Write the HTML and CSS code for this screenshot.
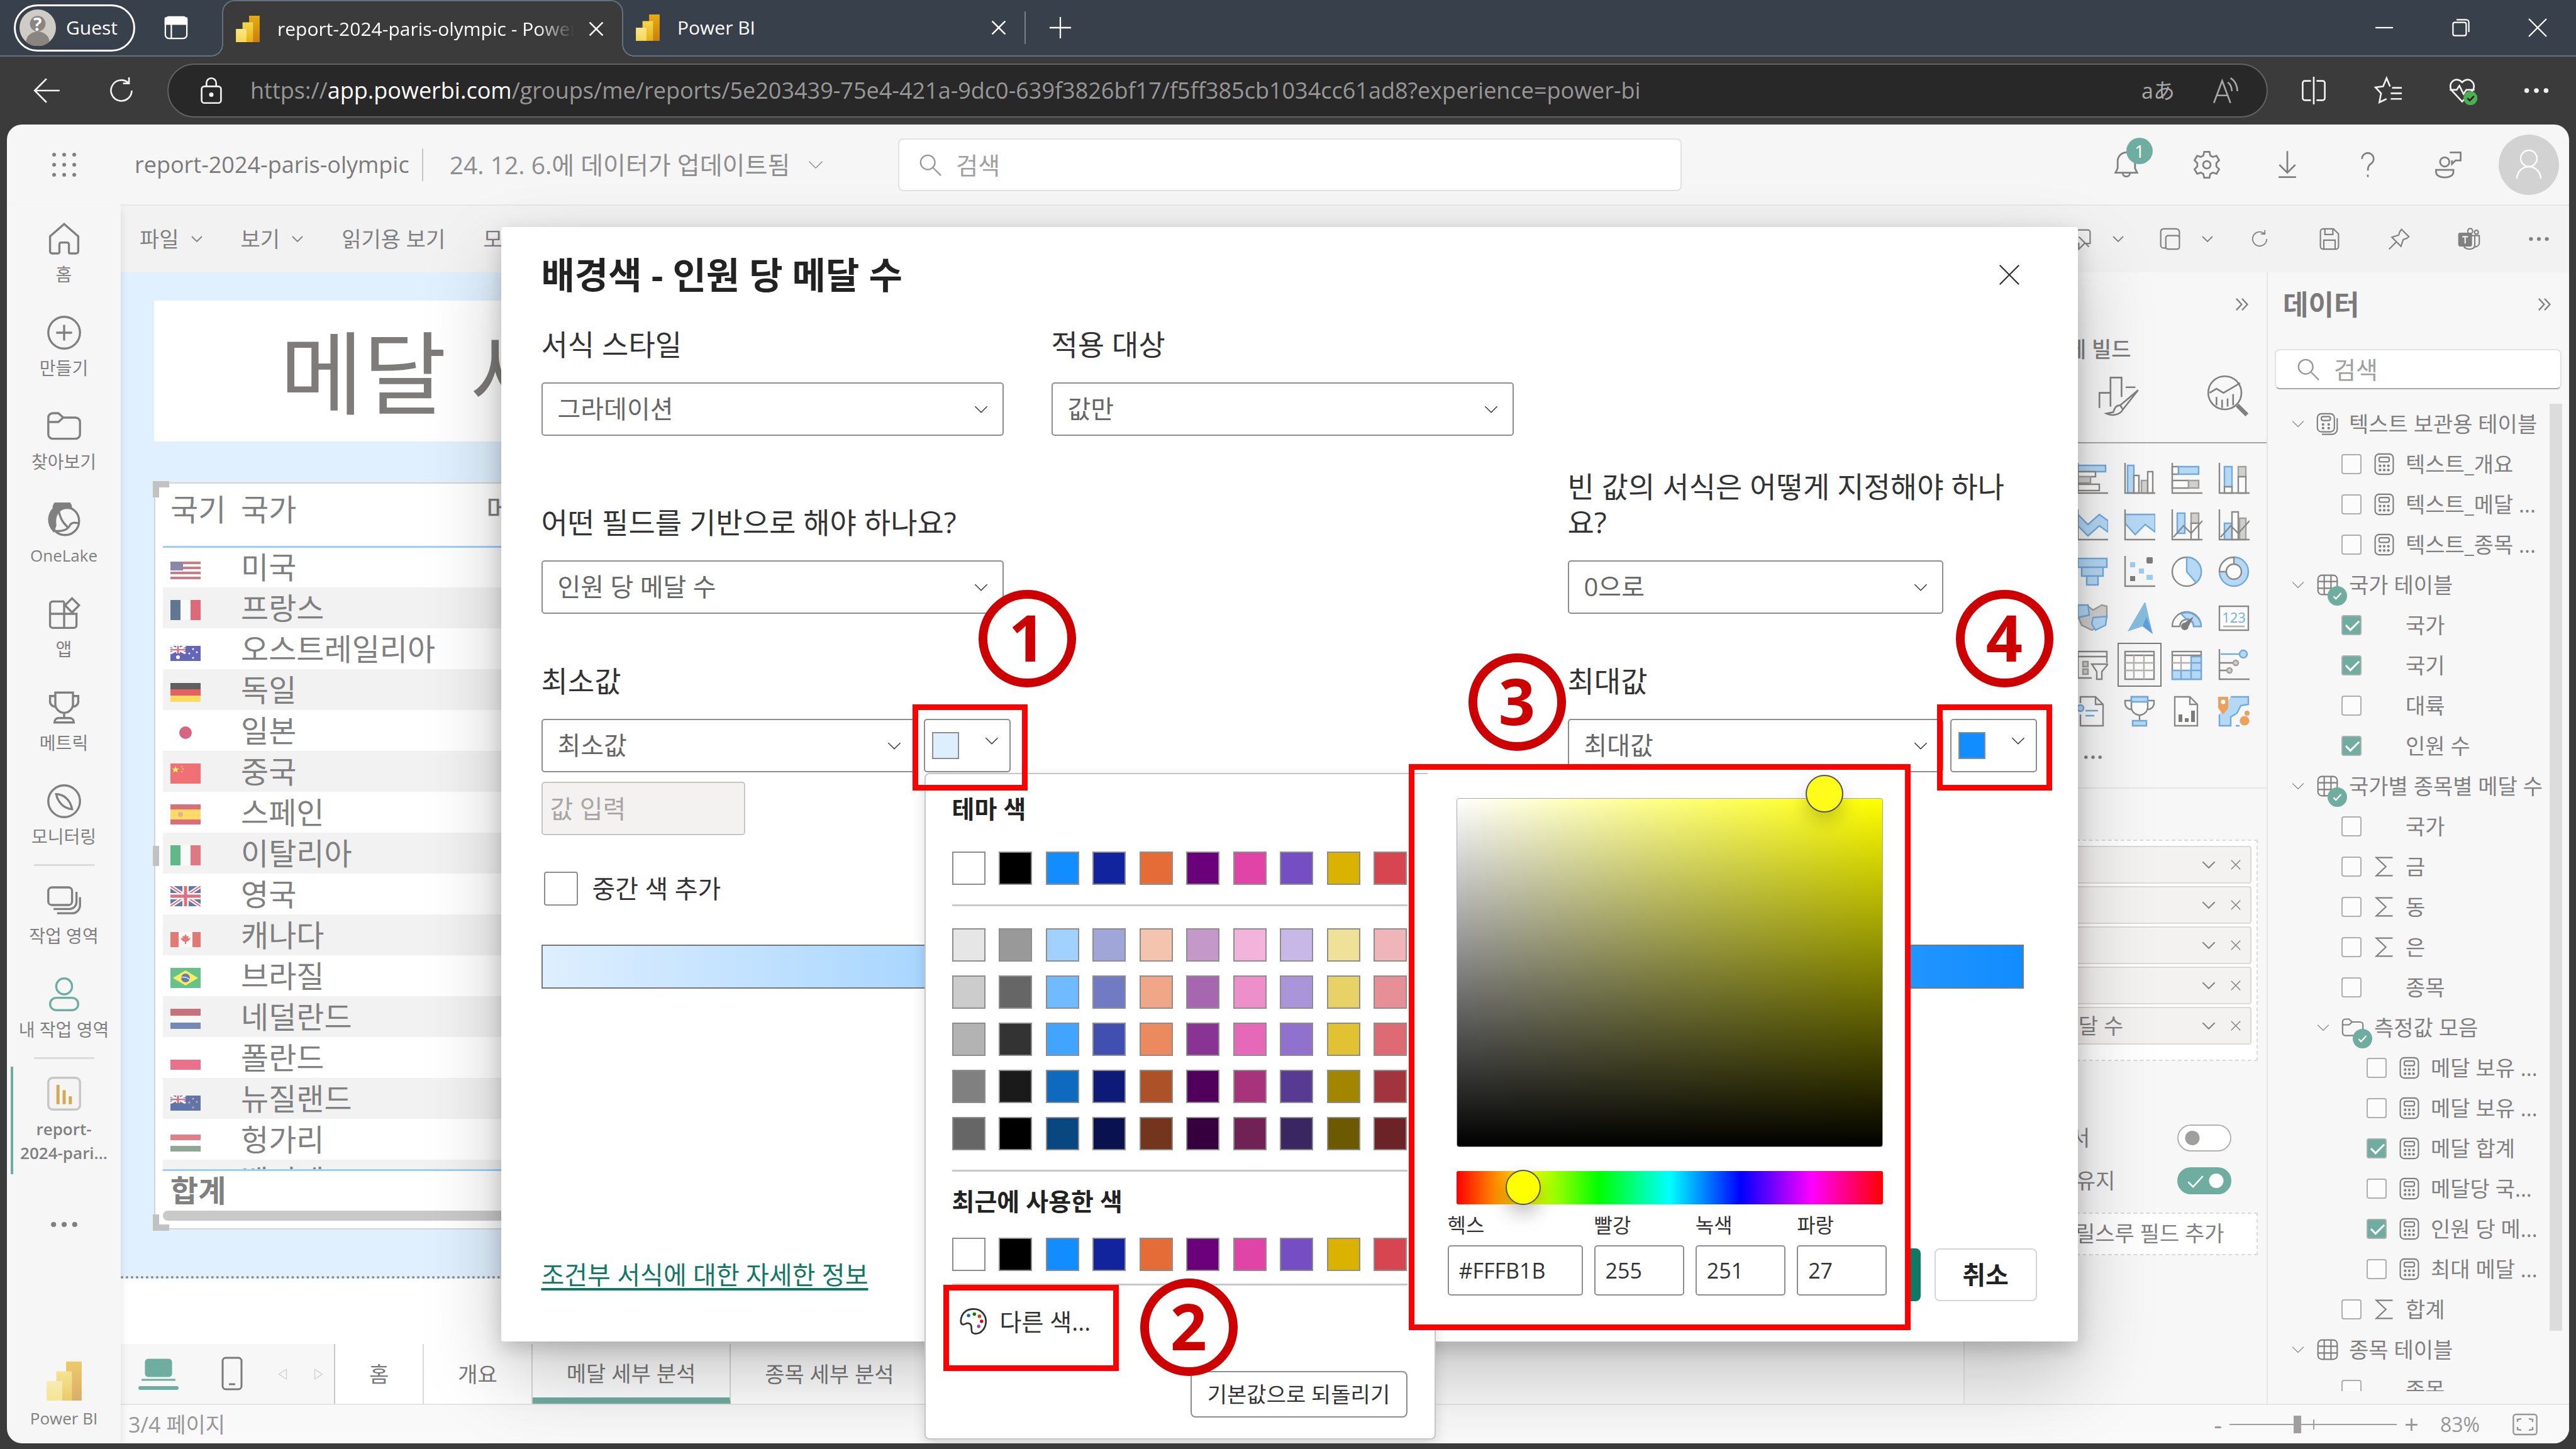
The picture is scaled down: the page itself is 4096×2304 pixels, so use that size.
FILE: index.html
```html
<!DOCTYPE html>
<html lang="ko">
<head>
  <meta charset="UTF-8" />
  <meta name="viewport" content="width=device-width, initial-scale=1.0" />
  <title>report-2024-paris-olympic - Power BI</title>
  <link rel="stylesheet" href="styles.css">
</head>
<body>
  <svg class="defs" aria-hidden="true">
    <defs>
      <linearGradient id="g1" x1="0" y1="0" x2="0" y2="1"><stop offset="0" stop-color="#e6ad10"/><stop offset="1" stop-color="#c87e0e"/></linearGradient>
      <linearGradient id="g2" x1="0" y1="0" x2="0" y2="1"><stop offset="0" stop-color="#f6d751"/><stop offset="1" stop-color="#e6ad10"/></linearGradient>
      <linearGradient id="g3" x1="0" y1="0" x2="0" y2="1"><stop offset="0" stop-color="#f9e589"/><stop offset="1" stop-color="#f6d751"/></linearGradient>
    </defs>
    <symbol id="pbi" viewBox="0 0 20 20"><rect x="11" y="0" width="8" height="20" fill="url(#g1)"/><rect x="6" y="5" width="8" height="15" fill="url(#g2)"/><rect x="1" y="10" width="8" height="10" fill="url(#g3)"/></symbol>
    <symbol id="chev" viewBox="0 0 20 20"><path d="M2 6l8 8 8-8"/></symbol>
    <symbol id="dbl" viewBox="0 0 20 20"><path d="M3 3l6.500 7L3 17M10 3l6.500 7L10 17"/></symbol>
    <symbol id="x" viewBox="0 0 20 20"><path d="M2 2l16 16M18 2L2 18"/></symbol>
    <symbol id="plus" viewBox="0 0 20 20"><path d="M10 1v18M1 10h18"/></symbol>
    <symbol id="search" viewBox="0 0 20 20"><circle cx="8" cy="8" r="6"/><path d="M12.500 12.500L19 19"/></symbol>
    <symbol id="dots" viewBox="0 0 20 20"><g fill="currentColor" stroke="none"><circle cx="3" cy="10" r="1.700"/><circle cx="10" cy="10" r="1.700"/><circle cx="17" cy="10" r="1.700"/></g></symbol>
    <symbol id="refresh" viewBox="0 0 20 20"><path d="M17.500 10a7.500 7.500 0 1 1-2.700-5.800M15.500 .5v4.300h-4.300"/></symbol>
    <symbol id="home" viewBox="0 0 20 20"><path d="M2 8.500L10 1.500l8 7V17a1.200 1.200 0 0 1-1.200 1.200h-3.300a.8.800 0 0 1-.8-.8V13a1 1 0 0 0-1-1H8.300a1 1 0 0 0-1 1v4.400a.8.800 0 0 1-.8.800H3.200A1.200 1.200 0 0 1 2 17z"/></symbol>
    <symbol id="create" viewBox="0 0 20 20"><circle cx="10" cy="10" r="9"/><path d="M10 5.500v9M5.500 10h9"/></symbol>
    <symbol id="folder" viewBox="0 0 20 20"><path d="M1 5a2.500 2.500 0 0 1 2.500-2.500h3.200L9.500 5h7A2.500 2.500 0 0 1 19 7.500v7a2.500 2.500 0 0 1-2.500 2.500h-13A2.500 2.500 0 0 1 1 14.500zM1 7.500h5.700L9.500 5"/></symbol>
    <symbol id="lake" viewBox="0 0 20 20"><circle cx="10.500" cy="10.500" r="8"/><path d="M4 16a9 9 0 0 1 0-12.500A5 5 0 0 1 14 3.300C8 2 4 6 5 13z" fill="currentColor"/><path d="M7 5c1 5 3 7 5 9M4.500 16c5 1 8-1 9-3.500 1.500-1.500 3-1 5-.7"/></symbol>
    <symbol id="apps" viewBox="0 0 20 20"><path d="M10 3H3.500A1.500 1.500 0 0 0 2 4.500v12A1.500 1.500 0 0 0 3.500 18h12a1.500 1.500 0 0 0 1.500-1.500V10H2M10 3v15M14.500 1.200l4 4-4 4-4-4z"/></symbol>
    <symbol id="trophy" viewBox="0 0 20 20"><path d="M5 1.500h10V8a5 5 0 0 1-10 0zM5 3.500H2V6a3 3 0 0 0 3 3.500M15 3.500h3V6a3 3 0 0 1-3 3.500M10 13v3M4.500 18.500c0-1.500 1-2.500 2.500-2.500h6c1.500 0 2.500 1 2.500 2.500z"/></symbol>
    <symbol id="compass" viewBox="0 0 20 20"><circle cx="10" cy="10" r="9"/><path d="M5.500 6c4 0 8 3 9 8.500-4.500-.5-8-3.500-9-8.500z"/></symbol>
    <symbol id="stack" viewBox="0 0 20 20"><rect x="1" y="2.500" width="13.500" height="10" rx="2"/><path d="M4 14.800h9a4 4 0 0 0 4-4V5M6 17.200h8.500a4.500 4.500 0 0 0 4.500-4.500V8"/></symbol>
    <symbol id="person" viewBox="0 0 20 20"><circle cx="10" cy="5.500" r="4.500"/><rect x="2" y="12" width="16" height="7" rx="3.500"/></symbol>
    <symbol id="bell" viewBox="0 0 20 20"><path d="M10 1.500a6 6 0 0 0-6 6v5l-1.500 3h15l-1.500-3v-5a6 6 0 0 0-6-6zM7.500 15.500c0 3.500 5 3.500 5 0"/></symbol>
    <symbol id="gear" viewBox="0 0 20 20"><path d="M8.200 1h3.600l.6 2.600 1.700 1 2.600-.8 1.800 3.100-1.900 1.900v2.400l1.900 1.900-1.800 3.100-2.600-.8-1.700 1-.6 2.600H8.200l-.6-2.600-1.700-1-2.600.8-1.800-3.100 1.900-1.900V8.800L1.500 6.900l1.800-3.100 2.600.8 1.700-1z"/><circle cx="10" cy="10" r="2.600"/></symbol>
    <symbol id="down" viewBox="0 0 20 20"><path d="M10 .5v15M4.500 10l5.500 5.500 5.500-5.500M4 18.500h12"/></symbol>
    <symbol id="help" viewBox="0 0 20 20"><path d="M6 6a4 4 0 1 1 6.500 3c-1.500 1.200-2.500 2-2.500 5M10 16.800v1.700"/></symbol>
    <symbol id="feedback" viewBox="0 0 20 20"><circle cx="7.500" cy="8" r="3.200"/><path d="M1.500 13.500h12v1.500c0 5-12 5-12 0zM11 1.500h7.500V7H15l-2.500 2.500V7"/></symbol>
    <symbol id="lock" viewBox="0 0 20 20"><rect x="3" y="7" width="14" height="12" rx="2"/><path d="M6.500 7V4.500a3.500 3.500 0 0 1 7 0V7"/><circle cx="10" cy="13" r="1" fill="currentColor"/></symbol>
    <symbol id="calc" viewBox="0 0 20 20"><rect x="2" y="1" width="16" height="18" rx="3.500"/><rect x="5.500" y="4" width="9" height="4" rx="1.500"/><g fill="currentColor" stroke="none"><circle cx="6.300" cy="11.500" r="1.200"/><circle cx="10" cy="11.500" r="1.200"/><circle cx="13.700" cy="11.500" r="1.200"/><circle cx="6.300" cy="15.200" r="1.200"/><circle cx="10" cy="15.200" r="1.200"/><circle cx="13.700" cy="15.200" r="1.200"/></g></symbol>
    <symbol id="calcs" viewBox="0 0 20 20"><rect x="1" y="1" width="15" height="16" rx="3.500"/><rect x="4.500" y="3.500" width="8" height="3.500" rx="1.500"/><path d="M5 19.200h9a4.500 4.500 0 0 0 4.500-4.500V5"/><g fill="currentColor" stroke="none"><circle cx="6" cy="10.500" r="1.200"/><circle cx="11" cy="10.500" r="1.200"/><circle cx="6" cy="13.800" r="1.200"/><circle cx="11" cy="13.800" r="1.200"/></g></symbol>
    <symbol id="table" viewBox="0 0 20 20"><rect x="1.500" y="1.500" width="17" height="17" rx="3.500"/><path d="M7 1.500v17M13 1.500v17M1.500 7h17M1.500 13h17"/></symbol>
    <symbol id="sigma" viewBox="0 0 20 20"><path d="M17.500 2H3l8.500 8L3 18h14.500"/></symbol>
    <symbol id="back" viewBox="0 0 20 20"><path d="M19 10H1.500M9.500 1.500L1 10l8.500 8.500"/></symbol>

    <!-- visual gallery -->
    <symbol id="v-bar" viewBox="0 0 25 25"><rect class="vb" x="1" y="2" width="22" height="5"/><rect class="vw" x="1" y="7" width="14" height="4"/><rect class="vg" x="1" y="11" width="10" height="5"/><rect class="vw" x="1" y="17" width="17" height="5"/><path class="vl" d="M1 0v24h24"/></symbol>
    <symbol id="v-col" viewBox="0 0 25 25"><rect class="vb" x="3" y="2" width="5" height="22"/><rect class="vw" x="8" y="10" width="4" height="14"/><rect class="vg" x="14" y="14" width="5" height="10"/><rect class="vw" x="19" y="7" width="4" height="17"/><path class="vl" d="M1 0v24h24"/></symbol>
    <symbol id="v-sbar" viewBox="0 0 25 25"><rect class="vw" x="1" y="3" width="5" height="6"/><rect class="vb" x="6" y="3" width="16" height="6"/><rect class="vw" x="1" y="14" width="13" height="6"/><rect class="vg" x="14" y="14" width="8" height="6"/><path class="vl" d="M1 0v24h24"/></symbol>
    <symbol id="v-scol" viewBox="0 0 25 25"><rect class="vb" x="5" y="3" width="6" height="16"/><rect class="vw" x="5" y="19" width="6" height="5"/><rect class="vg" x="16" y="3" width="6" height="8"/><rect class="vw" x="16" y="11" width="6" height="13"/><path class="vl" d="M1 0v24h24"/></symbol>
    <symbol id="v-area" viewBox="0 0 25 25"><path class="vb" d="M1 4l8 8 9-8 7 5v9l-7-5-9 8-8-8z"/><path class="vl" d="M1 0v24h24"/></symbol>
    <symbol id="v-sarea" viewBox="0 0 25 25"><path class="vb" d="M1 4h24v14l-8-6-8 8-8-9z"/><path class="vl" d="M1 0v24h24"/></symbol>
    <symbol id="v-combo" viewBox="0 0 25 25"><rect class="vb" x="5" y="3" width="6" height="16"/><rect class="vg" x="16" y="3" width="6" height="8"/><rect class="vw" x="16" y="11" width="6" height="13"/><path class="vl" d="M1 0v24h24M2 22l8-9 6 6 9-10"/></symbol>
    <symbol id="v-combo2" viewBox="0 0 25 25"><rect class="vb" x="5" y="11" width="6" height="13"/><rect class="vw" x="11" y="2" width="5" height="22"/><rect class="vg" x="17" y="7" width="5" height="17"/><path class="vl" d="M1 0v24h24M2 22l8-9 6 6 9-10"/></symbol>
    <symbol id="v-funnel" viewBox="0 0 25 25"><rect class="vb" x="1" y="2" width="23" height="7"/><rect class="vb" x="4" y="9" width="17" height="7"/><rect class="vb" x="8" y="16" width="9" height="7"/></symbol>
    <symbol id="v-scatter" viewBox="0 0 25 25"><path class="vl" d="M1 0v24h24"/><g stroke="none"><rect x="5" y="5" width="4" height="4" fill="#9ccbf3"/><rect x="12" y="10" width="4" height="4" fill="#9ccbf3"/><rect x="18" y="15" width="5" height="4" fill="#9ccbf3"/><rect x="18" y="1" width="5" height="5" rx="1" fill="#7d7c7b"/><rect x="5" y="16" width="4" height="4" fill="#7d7c7b"/></g></symbol>
    <symbol id="v-pie" viewBox="0 0 25 25"><circle class="vw" cx="12.500" cy="12.500" r="11.500"/><path class="vb" d="M12.500 1a11.500 11.500 0 0 1 7.500 20.300l-7.500-8.800z"/></symbol>
    <symbol id="v-donut" viewBox="0 0 25 25"><circle class="vb" cx="12.500" cy="12.500" r="11.500"/><path class="vw" d="M12.500 1v5.500a6 6 0 0 0-6 6H1A11.500 11.500 0 0 1 12.500 1z"/><circle class="vw" cx="12.500" cy="12.500" r="6"/></symbol>
    <symbol id="v-map" viewBox="0 0 25 25"><path class="vg" d="M1 2l8 1 4 3 7-4 4 1v9l-4 6-8 4-8-4-3-7z"/><path class="vb" d="M1 2h8l1 8-9 2zM13 12l11-1-1 7-8 4-3-5z"/></symbol>
    <symbol id="v-arc" viewBox="0 0 25 25"><g stroke="none"><path d="M17 -1l6 26-8-6L3 23z" fill="#86bcdc"/><path d="M18 11l5 14-8-6z" fill="#5c9fe0"/></g></symbol>
    <symbol id="v-gauge" viewBox="0 0 25 25"><path class="vw" d="M1 19a11.500 11.500 0 0 1 23 0h-6a5.500 5.500 0 0 0-11 0z"/><path class="vb" d="M8 9a11.500 11.500 0 0 1 16 10h-6a5.500 5.500 0 0 0-6-6z"/><path d="M18 11l-7 5a3 3 0 1 0 3 3z" fill="#7d7c7b" stroke="none"/></symbol>
    <symbol id="v-card" viewBox="0 0 25 25"><rect class="vw" x="1" y="3" width="23" height="19"/><text x="12.500" y="16" text-anchor="middle" class="vt">123</text><path class="vl2" d="M4 19h17"/></symbol>
    <symbol id="v-slicer" viewBox="0 0 25 25"><path class="vw" d="M12 23H1V2h23v9M1 6h23"/><rect class="vg" x="5" y="10" width="4" height="4"/><rect class="vg" x="5" y="16" width="4" height="4"/><path class="vw" d="M12 12h13l-5 6v6h-4v-6z"/></symbol>
    <symbol id="v-table" viewBox="0 0 25 25"><rect class="vw" x="1" y="2" width="23" height="22"/><path class="vl" d="M1 5h23"/><path class="vl2" d="M8 5v19M16 5v19M1 11h23M1 17h23"/></symbol>
    <symbol id="v-matrix" viewBox="0 0 25 25"><rect class="vw" x="1" y="2" width="23" height="22"/><path class="vb" d="M16 6h8v18H1v-7h15zM8 17v7M16 11h8M16 17h8M16 17v7"/><path class="vl2" d="M8 6v11M1 11h15"/><path class="vl" d="M1 5h23"/></symbol>
    <symbol id="v-lines" viewBox="0 0 25 25"><path class="vl" d="M1 0v24h24M1 11h11M1 17h6"/><path class="vb" d="M2 4h15"/><circle class="vb" cx="20" cy="4" r="3"/><circle class="vg" cx="14" cy="11" r="2"/><circle class="vg" cx="9" cy="17" r="2"/></symbol>
    <symbol id="v-narr" viewBox="0 0 25 25"><path class="vw" d="M3 6V1h12l6 6v17H3v-9M15 1v6h6"/><circle class="vb" cx="3" cy="10" r="2.500"/><path class="vb" d="M7 12h10M7 16h7"/></symbol>
    <symbol id="v-goal" viewBox="0 0 25 25"><path class="vw" d="M6 1h13v8a6.500 6.500 0 0 1-13 0zM6 4H1v2a5 5 0 0 0 5 5M19 4h5v2a5 5 0 0 1-5 5M12.500 16v5"/><path class="vb" d="M6 1h13v4H6zM7 24v-4h11v4z"/></symbol>
    <symbol id="v-page" viewBox="0 0 25 25"><path class="vw" d="M3 1h12l6 6v17H3zM15 1v6h6"/><path d="M6 15h3v6H6zM11 18h3v3h-3zM16 12h3v9h-3z" fill="#7d7c7b" stroke="none"/></symbol>
    <symbol id="v-geo" viewBox="0 0 25 25"><path class="vb" d="M10 1h14v6l-6 1-3 6-5 3v7H1V15M14 24h3"/><g stroke="none"><path d="M0 1h8v9l-4 5-4-5z" fill="#eba05c"/><circle cx="4" cy="5" r="1.800" fill="#fff"/><circle cx="21" cy="20" r="3.800" fill="#eba05c"/><circle cx="23" cy="14" r="2" fill="#eba05c"/></g></symbol>
  </svg>

  <header class="titlebar">
    <button class="guest"><svg viewBox="0 0 28 28"><circle cx="14" cy="14" r="14" fill="#cfcbc6"/><circle cx="14" cy="11" r="6" fill="#8a8580"/><path d="M5 25a9 8 0 0 1 18 0 14 14 0 0 1-18 0z" fill="#8a8580"/></svg><b>?</b>Guest</button>
    <button class="tab-actions" aria-label="탭 작업"><svg viewBox="0 0 20 20"><rect x="1" y="1" width="18" height="18" rx="3"/><path d="M1 2h18v5H1z" fill="currentColor"/><path d="M6 7v12"/></svg></button>
    <div class="tab tab-active"><svg class="pbi"><use href="#pbi"/></svg><span>report-2024-paris-olympic - Power BI</span><button aria-label="탭 닫기"><svg><use href="#x"/></svg></button></div>
    <div class="tab"><svg class="pbi"><use href="#pbi"/></svg><span>Power BI</span><button aria-label="탭 닫기"><svg><use href="#x"/></svg></button></div>
    <button class="new-tab" aria-label="새 탭"><svg><use href="#plus"/></svg></button>
    <div class="win">
      <button aria-label="최소화"><svg viewBox="0 0 20 20"><path d="M0 10h20"/></svg></button>
      <button aria-label="이전 크기로"><svg viewBox="0 0 20 20"><rect x="1" y="4" width="15" height="15" rx="2"/><path d="M5 1h11a3 3 0 0 1 3 3v11"/></svg></button>
      <button aria-label="닫기"><svg viewBox="0 0 20 20"><path d="M0 0l20 20M20 0L0 20"/></svg></button>
    </div>
  </header>

  <nav class="toolbar">
    <button aria-label="뒤로"><svg><use href="#back"/></svg></button>
    <button aria-label="새로 고침"><svg><use href="#refresh"/></svg></button>
    <div class="address">
      <svg><use href="#lock"/></svg>
      <span class="url">https://<b>app.powerbi.com</b>/groups/me/reports/5e203439-75e4-421a-9dc0-639f3826bf17/f5ff385cb1034cc61ad8?experience=power-bi</span>
      <span class="lang">aあ</span>
      <svg class="read" viewBox="0 0 20 20"><path d="M1 19L7 3l6 16M3 13.500h8M11 4c2 1.500 3 4 3 6.500M13 1c3.500 2 5 6 5 9.500"/></svg>
    </div>
    <button aria-label="화면 분할"><svg viewBox="0 0 20 20"><path d="M8 3H3.500A1.500 1.500 0 0 0 2 4.500v11A1.500 1.500 0 0 0 3.500 17H8M12 3h4.500A1.500 1.500 0 0 1 18 4.500v11a1.500 1.500 0 0 1-1.500 1.500H12M10 0v20"/></svg></button>
    <button aria-label="즐겨찾기"><svg viewBox="0 0 20 20"><path d="M11.500 7L9 1 6.500 7 1 7.700l4 4.300-1.200 6.500L9 16M13 8h7M12 12h8M12 16h8"/></svg></button>
    <button class="health" aria-label="성능"><svg viewBox="0 0 20 20"><path d="M10 18L2.500 10C-1 5 5-1 10 4c5-5 11 1 7.500 6zM1 9.500h5l2-3 3 6 2-3h6"/><circle cx="16" cy="15.500" r="5" fill="#4caf50" stroke="none"/><path d="M13.800 15.500l1.700 1.700 3-3.200" stroke="#222"/></svg></button>
    <button aria-label="설정"><svg><use href="#dots"/></svg></button>
  </nav>

  <main class="app">
    <header class="app-header">
      <button class="waffle" aria-label="앱 시작 관리자"><svg viewBox="0 0 20 20"><g fill="currentColor" stroke="none"><circle cx="2" cy="2" r="1.500"/><circle cx="10" cy="2" r="1.500"/><circle cx="18" cy="2" r="1.500"/><circle cx="2" cy="10" r="1.500"/><circle cx="10" cy="10" r="1.500"/><circle cx="18" cy="10" r="1.500"/><circle cx="2" cy="18" r="1.500"/><circle cx="10" cy="18" r="1.500"/><circle cx="18" cy="18" r="1.500"/></g></svg></button>
      <span class="report-name">report-2024-paris-olympic</span>
      <button class="updated">24. 12. 6.에 데이터가 업데이트됨<svg><use href="#chev"/></svg></button>
      <label class="search header-search"><svg><use href="#search"/></svg><input type="text" placeholder="검색" aria-label="검색"></label>
      <div class="header-icons">
        <button aria-label="알림"><svg><use href="#bell"/></svg><span class="count">1</span></button>
        <button aria-label="설정"><svg><use href="#gear"/></svg></button>
        <button aria-label="다운로드"><svg><use href="#down"/></svg></button>
        <button aria-label="도움말"><svg><use href="#help"/></svg></button>
        <button aria-label="피드백"><svg><use href="#feedback"/></svg></button>
        <button aria-label="계정"><svg class="avatar" viewBox="0 0 48 48"><circle cx="24" cy="24" r="24" fill="#d2d2d2" stroke="none"/><circle cx="24" cy="19" r="6.500"/><path d="M14.500 35a9.500 9.500 0 0 1 19 0"/></svg></button>
      </div>
    </header>

    <div class="app-body">
      <nav class="rail">
        <a href="#"><svg><use href="#home"/></svg>홈</a>
        <a href="#"><svg><use href="#create"/></svg>만들기</a>
        <a href="#"><svg><use href="#folder"/></svg>찾아보기</a>
        <a href="#" class="latin"><svg><use href="#lake"/></svg>OneLake</a>
        <a href="#"><svg><use href="#apps"/></svg>앱</a>
        <a href="#"><svg><use href="#trophy"/></svg>메트릭</a>
        <a href="#"><svg><use href="#compass"/></svg>모니터링</a>
        <hr>
        <a href="#"><svg><use href="#stack"/></svg>작업 영역</a>
        <a href="#"><svg class="green"><use href="#person"/></svg>내 작업 영역</a>
        <hr>
        <a href="#" class="current"><svg viewBox="0 0 20 20"><rect x="1" y="1" width="18" height="18" rx="2.500" stroke="#c6c6c6" fill="#f4f4f4"/><path d="M6.500 5v11M10 8v8M13.500 11.500V16" stroke="#d4ab55" stroke-width="1.800"/></svg>report-<br>2024-pari...</a>
        <button class="more" aria-label="더 보기"><svg><use href="#dots"/></svg></button>
        <a href="#" class="logo latin"><svg><use href="#pbi"/></svg>Power BI</a>
      </nav>

      <div class="main">
        <div class="ribbon">
          <button>파일<svg><use href="#chev"/></svg></button>
          <button>보기<svg><use href="#chev"/></svg></button>
          <button>읽기용 보기</button>
          <button>모바일 레이아웃</button>
          <div class="ribbon-right">
            <svg viewBox="0 0 20 20"><path d="M2 2h14a2 2 0 0 1 2 2v10h-5l-5 5v-5H2M8 8l9 9"/></svg>
            <svg class="small"><use href="#chev"/></svg>
            <svg viewBox="0 0 20 20"><rect x="6" y="7" width="12" height="12" rx="2"/><path d="M6 18H4a2.500 2.500 0 0 1-2.500-2.500v-12A2.500 2.500 0 0 1 4 1h11a3 3 0 0 1 3 3v5"/></svg>
            <svg class="small"><use href="#chev"/></svg>
            <svg class="reload"><use href="#refresh"/></svg>
            <svg viewBox="0 0 20 20"><path d="M2 3.500A2.500 2.500 0 0 1 4.500 1h9L18 5.500v11a2.500 2.500 0 0 1-2.500 2.500h-11A2.500 2.500 0 0 1 2 16.500zM6 1v5h7V1M5 19v-8h10v8"/></svg>
            <svg viewBox="0 0 20 20"><path d="M12 1.500l6.500 6.500-2 1.500-3 1-2 6-8-8 6-2 1-3zM7.500 12.500L1 19"/></svg>
            <svg viewBox="0 0 20 20"><rect x="1" y="5" width="11" height="11" rx="1" fill="currentColor"/><path d="M4 8h5M6.500 8v6" stroke="#f2f2f2"/><circle cx="11" cy="3" r="2.200"/><circle cx="16.500" cy="4" r="1.700"/><path d="M12 7h7v7a4 4 0 0 1-4 3M5 16c2 4 9 4 10 0V7"/></svg>
            <svg><use href="#dots"/></svg>
          </div>
        </div>

        <div class="work">
          <section class="report">
            <div class="page">
              <h1>메달 세부 분석</h1>
              <div class="visual">
                <i class="handle tl"></i><i class="handle ml"></i><i class="handle bl"></i>
                <div class="rows">
                  <table>
                    <thead><tr><th>국기</th><th>국가</th><th>메달 합계</th><th></th></tr></thead>
                    <tbody id="countries"></tbody>
                  </table>
                </div>
                <div class="total">합계</div>
                <div class="hscroll"></div>
              </div>
            </div>
            <div class="below"></div>
            <div class="pages">
              <div class="views">
                <svg class="green" viewBox="0 0 64 50"><rect x="11" y="1" width="42" height="28" rx="5" fill="currentColor"/><path d="M5 34h54" stroke-width="3"/><path d="M3 47h58" stroke-width="6" stroke-linecap="round"/></svg>
                <svg viewBox="0 0 34 56"><rect x="2" y="2" width="30" height="50" rx="5" stroke-width="3"/><path d="M12 44h10" stroke-width="3"/></svg>
                <svg class="arrow" viewBox="0 0 20 20"><path d="M15 3v14L4 10z"/></svg>
                <svg class="arrow" viewBox="0 0 20 20"><path d="M5 3v14l11-7z"/></svg>
              </div>
              <button>홈</button>
              <button>개요</button>
              <button class="on">메달 세부 분석</button>
              <button>종목 세부 분석</button>
            </div>
          </section>

          <aside class="pane viz">
            <div class="pane-head"><h2>시각화</h2><svg><use href="#dbl"/></svg></div>
            <p class="build">시각적 개체 빌드</p>
            <div class="modes">
              <svg viewBox="0 0 30 30"><use href="#v-table"/></svg>
              <svg viewBox="0 0 30 30"><path d="M1 24V13h8V2h8v14M20 9h7M9 13v10"/><path d="M29 11L16 22l2 3zM16 22c-3 0-4 2-5 5l-5 1c4 2 10 1 12-3"/></svg>
              <svg viewBox="0 0 30 30"><circle cx="13" cy="13" r="12"/><path d="M2 13l5-3 5 3L24 6M7 16v6M11 18v6M15 17v6M19 14v8"/><path d="M22 22l7 7" stroke-width="3"/></svg>
            </div>
            <div class="gallery" id="gallery"></div>
            <div class="more-viz"><svg><use href="#dots"/></svg></div>
            <div class="well">
              <div class="item">국가<svg><use href="#chev"/></svg><svg class="del"><use href="#x"/></svg></div>
              <div class="item">국기<svg><use href="#chev"/></svg><svg class="del"><use href="#x"/></svg></div>
              <div class="item">인원 수<svg><use href="#chev"/></svg><svg class="del"><use href="#x"/></svg></div>
              <div class="item">메달 합계<svg><use href="#chev"/></svg><svg class="del"><use href="#x"/></svg></div>
              <div class="item">인원 당 메달 수<svg><use href="#chev"/></svg><svg class="del"><use href="#x"/></svg></div>
            </div>
            <label class="switch">교차 보고서<input type="checkbox"><i></i></label>
            <label class="switch">모든 필터 유지<input type="checkbox" checked><i><svg viewBox="0 0 20 20"><path d="M1 11l6 6L19 4"/></svg></i></label>
            <div class="drop">여기에 드릴스루 필드 추가</div>
          </aside>

          <aside class="pane data">
            <div class="pane-head"><h2>데이터</h2><svg><use href="#dbl"/></svg></div>
            <label class="search data-search"><svg><use href="#search"/></svg><input type="text" placeholder="검색" aria-label="데이터 검색"></label>
            <div class="tree" id="tree"></div>
          </aside>
        </div>

        <footer class="status">
          <span>3/4 페이지</span>
          <div class="zoom">
            <button aria-label="축소">-</button>
            <input type="range" min="0" max="100" value="40" aria-label="확대/축소">
            <button aria-label="확대">+</button>
            <span>83%</span>
            <svg viewBox="0 0 20 20"><rect x="0.700" y="2" width="18.600" height="16" rx="2"/><path d="M4 8V6l3-.5M16 8V6l-3-.5M4 12v2l3 .5M16 12v2l-3 .5"/></svg>
          </div>
        </footer>
      </div>
    </div>

    <div class="overlay">
      <section class="dialog" role="dialog" aria-labelledby="dlg-title">
        <div class="dialog-head"><h2 id="dlg-title">배경색 - 인원 당 메달 수</h2><button aria-label="닫기"><svg><use href="#x"/></svg></button></div>

        <div class="row">
          <div class="field wide"><label for="style">서식 스타일</label><div class="select"><select id="style"><option>그라데이션</option></select><svg><use href="#chev"/></svg></div></div>
          <div class="field wide"><label for="target">적용 대상</label><div class="select"><select id="target"><option>값만</option></select><svg><use href="#chev"/></svg></div></div>
        </div>

        <div class="row row-based">
          <div class="field wide"><label for="based">어떤 필드를 기반으로 해야 하나요?</label><div class="select"><select id="based"><option>인원 당 메달 수</option></select><svg><use href="#chev"/></svg></div></div>
          <div class="field end"><label for="blank">빈 값의 서식은 어떻게 지정해야 하나요?</label><div class="select mid"><select id="blank"><option>0으로</option></select><svg><use href="#chev"/></svg></div></div>
        </div>

        <div class="row row-range">
          <div class="field end"><label for="min">최소값</label>
            <div class="pair"><div class="select mid"><select id="min"><option>최소값</option></select><svg><use href="#chev"/></svg></div>
            <button class="color" aria-label="최소값 색"><i class="min-color"></i><svg><use href="#chev"/></svg></button></div>
          </div>
          <div class="field end"><label for="max">최대값</label>
            <div class="pair"><div class="select mid"><select id="max"><option>최대값</option></select><svg><use href="#chev"/></svg></div>
            <button class="color" aria-label="최대값 색"><i class="max-color"></i><svg><use href="#chev"/></svg></button></div>
          </div>
        </div>

        <input class="value" type="text" placeholder="값 입력" aria-label="값 입력" disabled>
        <label class="middle"><input type="checkbox">중간 색 추가</label>
        <div class="ramp"></div>

        <div class="dialog-foot">
          <a href="#">조건부 서식에 대한 자세한 정보</a>
          <button class="primary">확인</button>
          <button>취소</button>
        </div>

        <div class="popup">
          <h3>테마 색</h3>
          <div class="swatches" id="theme"></div>
          <hr>
          <div id="shades"></div>
          <hr class="second">
          <h3 class="recent">최근에 사용한 색</h3>
          <div class="swatches" id="recent"></div>
          <hr class="third">
          <button class="other"><svg viewBox="0 0 20 20"><path d="M10.500 1.500c5 0 8.500 3.800 8.500 8.500 0 5-3.500 8.500-7 8.500-5.500 0-1-5.500-4.500-7C5 10.500 4.500 13 2.500 12 .5 11 1.500 1.500 10.500 1.500z"/><g stroke="none"><circle cx="7" cy="6" r="1.200" fill="#0f6cbd"/><circle cx="11" cy="5" r="1.200" fill="#107c10"/><circle cx="14.500" cy="6.500" r="1.200" fill="#d83b01"/><circle cx="16" cy="10" r="1.200" fill="#c50f1f"/><circle cx="14" cy="13.500" r="1.200" fill="#a33db8"/></g></svg>다른 색...</button>
          <button class="reset">기본값으로 되돌리기</button>
        </div>

        <div class="picker">
          <div class="sv"><i></i></div>
          <input class="hue" type="range" min="0" max="1000" value="126" aria-label="색상">
          <div class="channels">
            <label class="hex">헥스<input type="text" value="#FFFB1B"></label>
            <label>빨강<input type="text" value="255"></label>
            <label>녹색<input type="text" value="251"></label>
            <label>파랑<input type="text" value="27"></label>
          </div>
        </div>

        <div class="box box-min"></div>
        <div class="box box-max"></div>
        <div class="box box-other"></div>
        <div class="step step-1">1</div>
        <div class="step step-2">2</div>
        <div class="step step-3">3</div>
        <div class="step step-4">4</div>
      </section>
    </div>
  </main>
  <script src="script.js"></script>
</body>
</html>
```

FILE: styles.css
```css
* {
  box-sizing: border-box;
}
body {
  margin: 0;
  height: 100vh;
  display: flex;
  flex-direction: column;
  background: #3b3b3b;
  color: #808080;
  font-family: "Open Sans", "Noto Sans CJK KR", sans-serif;
  font-size: 34px;
  line-height: 44px;
  overflow: hidden;
}
button, input, select {
  font: inherit;
  color: inherit;
  border: 0;
  background: none;
  padding: 0;
  margin: 0;
}
h1, h2, h3, p {
  margin: 0;
  font-weight: 600;
}
svg {
  fill: none;
  stroke: currentColor;
  stroke-width: 1.2;
  flex: none;
  display: block;
}
.defs {
  position: absolute;
  width: 0;
  height: 0;
}
.pbi, .logo svg {
  stroke: none;
}
.green {
  color: #70ada1;
}

/* browser window */
.titlebar {
  height: 90px;
  flex: none;
  display: flex;
  align-items: center;
  background: #38404b;
  color: #fff;
  font-size: 30px;
  padding-left: 22px;
  border-bottom: 2px solid #66707c;
}
.guest {
  position: relative;
  width: 193px;
  height: 75px;
  border: 3px solid #fff;
  border-radius: 38px;
  display: flex;
  align-items: center;
  gap: 16px;
  padding-left: 6px;
}
.guest svg {
  width: 58px;
  height: 58px;
  stroke: none;
}
.guest b {
  position: absolute;
  left: 28px;
  top: 6px;
  font-size: 28px;
}
.tab-actions {
  margin: 0 54px 0 46px;
}
.tab-actions svg {
  width: 38px;
  height: 38px;
}
.tab {
  position: relative;
  width: 638px;
  height: 90px;
  display: flex;
  align-items: center;
  padding: 0 28px 0 18px;
}
.tab-active {
  align-self: flex-start;
  background: #3b3b3b;
  border: 2px solid #66707c;
  border-bottom: 0;
  border-radius: 20px 20px 0 0;
}
.tab-active::before, .tab-active::after {
  content: "";
  position: absolute;
  bottom: 0;
  width: 20px;
  height: 20px;
  background: radial-gradient(circle at 0 0, #38404b 18px, #66707c 18px, #66707c 20px, #3b3b3b 20px);
}
.tab-active::before {
  left: -20px;
}
.tab-active::after {
  right: -20px;
  background: radial-gradient(circle at 100% 0, #38404b 18px, #66707c 18px, #66707c 20px, #3b3b3b 20px);
}
.tab .pbi {
  width: 42px;
  height: 42px;
  margin-right: 26px;
}
.tab span {
  flex: 1;
  overflow: hidden;
  white-space: nowrap;
  margin-right: 22px;
}
.tab-active span {
  -webkit-mask-image: linear-gradient(to left, transparent, #000 60px);
  mask-image: linear-gradient(to left, transparent, #000 60px);
}
.tab button svg {
  width: 26px;
  height: 26px;
  stroke-width: 2;
}
.new-tab {
  border-left: 2px solid #77808a;
  height: 52px;
  padding-left: 36px;
}
.new-tab svg {
  width: 38px;
  height: 38px;
}
.win {
  margin-left: auto;
  display: flex;
}
.win button {
  width: 122px;
  display: flex;
  justify-content: center;
}
.win svg {
  width: 28px;
  height: 28px;
  stroke-width: 1.6;
  overflow: visible;
}
.toolbar {
  height: 108px;
  flex: none;
  display: flex;
  align-items: center;
  color: #f2f2f2;
  padding-left: 16px;
  padding-right: 4px;
}
.toolbar button {
  width: 118px;
  display: flex;
  justify-content: center;
}
.toolbar svg {
  width: 44px;
  height: 44px;
  overflow: visible;
}
.address {
  flex: 1;
  height: 86px;
  border: 2px solid #626262;
  border-radius: 43px;
  background: #282828;
  margin: 0 14px;
  padding: 0 42px 0 46px;
  display: flex;
  align-items: center;
}
.url {
  flex: 1;
  margin-left: 40px;
  color: #979797;
  font-size: 36px;
  white-space: nowrap;
}
.url b {
  font-weight: 400;
  color: #fff;
}
.lang {
  color: #a8a8a8;
  margin-right: 60px;
}
.read {
  color: #a8a8a8;
}

/* app shell */
.app {
  flex: 1;
  min-height: 0;
  margin: 0 11px 9px;
  border-radius: 24px;
  overflow: hidden;
  background: #f6f6f6;
  display: flex;
  flex-direction: column;
  position: relative;
}
.app-header {
  height: 127px;
  flex: none;
  display: flex;
  align-items: center;
}
.waffle {
  width: 181px;
  display: flex;
  justify-content: center;
}
.waffle svg {
  width: 40px;
  height: 40px;
}
.report-name {
  font-size: 36px;
  color: #7b7b7b;
  padding: 4px 20px 4px 22px;
  border-right: 2px solid #c6c6c6;
}
.updated {
  font-size: 39px;
  color: #8e8e8e;
  display: flex;
  align-items: center;
  gap: 28px;
  margin-left: 42px;
}
.updated svg {
  width: 26px;
  height: 26px;
}
.search {
  background: #fff;
  border: 2px solid #e2e2e2;
  border-radius: 8px;
  display: flex;
  align-items: center;
  color: #979797;
  font-size: 38px;
}
.search svg {
  width: 38px;
  height: 38px;
}
.search input {
  flex: 1;
  min-width: 0;
  margin-left: 22px;
  outline: 0;
}
.search input::placeholder {
  color: #a0a0a0;
}
.header-search {
  width: 1246px;
  height: 84px;
  margin-left: 118px;
  padding-left: 30px;
}
.header-icons {
  margin-left: auto;
  display: flex;
  align-items: center;
}
.header-icons button {
  width: 128px;
  display: flex;
  justify-content: center;
  position: relative;
}
.header-icons svg {
  width: 46px;
  height: 46px;
}
.header-icons .avatar {
  width: 96px;
  height: 96px;
  stroke: #fff;
}
.count {
  position: absolute;
  left: 64px;
  top: -20px;
  width: 42px;
  height: 42px;
  border-radius: 21px;
  background: #70ada1;
  color: #fff;
  font-size: 28px;
  line-height: 42px;
  text-align: center;
}
.app-body {
  flex: 1;
  min-height: 0;
  display: flex;
}
.rail {
  width: 181px;
  flex: none;
  display: flex;
  flex-direction: column;
  font-size: 28px;
  line-height: 38px;
  box-shadow: 0 8px 12px rgba(0, 0, 0, .12);
  z-index: 1;
  padding-top: 2px;
}
.rail a {
  color: inherit;
  text-decoration: none;
  text-align: center;
  padding: 25px 0 21px;
  white-space: nowrap;
}
.rail svg {
  width: 56px;
  height: 56px;
  margin: 0 auto 9px;
}
.rail hr {
  width: 96px;
  height: 3px;
  border: 0;
  background: #dcdcdc;
  margin: 4px auto 2px;
}
.rail .latin {
  font-size: 26px;
}
.rail .current {
  position: relative;
  font-weight: 600;
  font-size: 26px;
}
.rail .current::before {
  content: "";
  position: absolute;
  left: 6px;
  top: 10px;
  bottom: 6px;
  width: 4px;
  background: #70ada1;
}
.more {
  margin-top: 50px;
}
.rail .more svg {
  width: 48px;
  height: 48px;
}
.rail .logo {
  margin-top: auto;
}
.rail .logo svg {
  opacity: .6;
  width: 62px;
  height: 62px;
}
.main {
  flex: 1;
  min-width: 0;
  display: flex;
  flex-direction: column;
  border-top: 2px solid #e6e6e6;
}
.ribbon {
  height: 106px;
  flex: none;
  display: flex;
  align-items: center;
  background: #f2f2f2;
  padding-left: 30px;
}
.ribbon button {
  display: flex;
  align-items: center;
  gap: 18px;
  margin-right: 60px;
  white-space: nowrap;
}
.ribbon button svg, .ribbon .small {
  width: 20px;
  height: 20px;
  stroke-width: 1.8;
}
.ribbon-right {
  margin-left: auto;
  display: flex;
  align-items: center;
  gap: 75px;
  padding-right: 30px;
}
.ribbon-right svg {
  width: 36px;
  height: 36px;
}
.ribbon-right .small {
  margin: 0 -20px 0 -44px;
}
.ribbon-right .reload {
  width: 30px;
  height: 30px;
  margin: 0 3px;
}
.work {
  flex: 1;
  min-height: 0;
  display: flex;
}

/* report canvas */
.report {
  flex: 1;
  min-width: 0;
  display: flex;
  flex-direction: column;
}
.page {
  flex: 1;
  min-height: 0;
  background: #e0f0fe;
  border-bottom: 4px dotted #8b8b8b;
  padding: 45px 60px 74px 53px;
  display: flex;
  flex-direction: column;
  gap: 65px;
}
.page h1 {
  background: #fff;
  height: 224px;
  line-height: 228px;
  padding-left: 200px;
  font-size: 144px;
  font-weight: 400;
  color: #7d7c7b;
  white-space: nowrap;
}
.visual {
  flex: 1;
  min-height: 0;
  position: relative;
  background: #fff;
  border: 2px solid #d4d4d4;
  padding: 0 12px 12px;
  display: flex;
  flex-direction: column;
  font-size: 48px;
  line-height: 60px;
}
.handle {
  position: absolute;
  left: -4px;
  width: 26px;
  height: 26px;
  border: 0 solid #c2c2c2;
  border-left-width: 10px;
}
.tl {
  top: -4px;
  border-top-width: 10px;
}
.ml {
  top: 576px;
  height: 32px;
}
.bl {
  bottom: -4px;
  border-bottom-width: 10px;
}
.rows {
  flex: 1;
  min-height: 0;
  overflow: hidden;
}
.visual table {
  border-collapse: collapse;
  width: 100%;
}
.visual th {
  font-weight: 400;
  text-align: left;
  height: 100px;
  padding: 0 0 16px;
  border-bottom: 3px solid #9ccffc;
}
.visual td {
  height: 65px;
  padding: 0;
  line-height: 60px;
}
.visual tr > :first-child {
  width: 124px;
  padding-left: 12px;
}
.visual tr > :nth-child(2) {
  width: 390px;
}
.visual tbody tr:nth-child(even) {
  background: #f2f2f2;
}
.visual td svg {
  width: 48px;
  height: 32px;
  margin-top: 6px;
  opacity: .6;
  stroke: none;
}
.total {
  border-top: 3px solid #9ccffc;
  font-weight: 700;
  padding-left: 12px;
  height: 66px;
  line-height: 62px;
}
.hscroll {
  height: 16px;
  border-radius: 8px;
  background: #c9c9c9;
}
.below {
  height: 104px;
  flex: none;
  background: #fff;
}
.pages {
  height: 95px;
  flex: none;
  display: flex;
  background: #fafafa;
  color: #7a7a7a;
}
.pages button {
  padding: 0 54px;
  border-right: 2px solid #d8d8d8;
  background: #fff;
}
.pages .on {
  border-bottom: 10px solid #70ada1;
  padding-top: 8px;
}
.views {
  width: 341px;
  display: flex;
  align-items: center;
  padding-left: 28px;
  background: #f7f7f7;
  border-right: 2px solid #c8c8c8;
}
.views svg {
  width: 64px;
  height: 50px;
}
.views svg:nth-child(2) {
  width: 34px;
  height: 56px;
  margin: 0 53px 0 68px;
}
.views .arrow {
  width: 22px;
  height: 22px;
  margin-right: 34px;
  color: #cfcfcf;
}

/* side panes */
.pane {
  flex: none;
  background: #f7f7f7;
  border-left: 2px solid #e6e6e6;
  display: flex;
  flex-direction: column;
}
.viz {
  width: 482px;
}
.data {
  width: 481px;
}
.pane-head {
  height: 102px;
  flex: none;
  display: flex;
  align-items: center;
  justify-content: space-between;
  padding: 0 26px 0 24px;
}
.pane-head h2 {
  font-size: 44px;
  color: #7a7a7a;
}
.pane-head svg {
  width: 26px;
  height: 26px;
  stroke-width: 1.8;
}
.build {
  padding-left: 28px;
  margin-top: -2px;
  font-weight: 500;
}
.modes {
  height: 128px;
  flex: none;
  border-bottom: 2px solid #a8a6a4;
  display: flex;
  align-items: center;
  justify-content: center;
  gap: 107px;
  padding: 0 0 22px 10px;
}
.modes svg {
  width: 66px;
  height: 66px;
}
.gallery {
  display: grid;
  grid-template-columns: repeat(6, 50px);
  gap: 24px 25px;
  padding: 31px 0 0 28px;
}
.gallery svg {
  width: 50px;
  height: 50px;
}
.gallery .picked {
  outline: 2px solid #7d7c7b;
  outline-offset: 8px;
}
.vb {
  fill: #b5d8f5;
  stroke: #72a9d8;
}
.vw {
  fill: #fbfbfb;
  stroke: #8a8886;
}
.vg {
  fill: #d2d0ce;
  stroke: #a19f9d;
}
.vl {
  fill: none;
  stroke: #8a8886;
}
.vl2 {
  fill: none;
  stroke: #b5b3b1;
}
.vt {
  font-size: 11px;
  fill: #72b0e0;
  stroke: none;
}
.more-viz {
  height: 98px;
  flex: none;
  padding: 32px 0 0 188px;
  border-bottom: 2px solid #e6e6e6;
}
.more-viz svg {
  width: 32px;
  height: 32px;
}
.well {
  margin: 81px 14px 88px 16px;
  padding: 8px 8px 24px;
  border: 2px dashed #dadada;
  background: #fff;
  display: flex;
  flex-direction: column;
  gap: 4px;
}
.item {
  height: 60px;
  flex: none;
  border: 2px solid #dcdad8;
  border-radius: 4px;
  background: #f4f2f1;
  display: flex;
  align-items: center;
  padding: 0 14px 0 10px;
}
.item svg {
  width: 24px;
  height: 24px;
  margin-left: auto;
  stroke-width: 1.6;
}
.item .del {
  width: 18px;
  height: 18px;
  margin-left: 22px;
}
.switch {
  display: flex;
  align-items: center;
  justify-content: space-between;
  padding: 0 56px 0 34px;
  height: 68px;
  flex: none;
}
.switch input {
  position: absolute;
  opacity: 0;
}
.switch i {
  width: 86px;
  height: 43px;
  border: 2px solid #b5b3b1;
  border-radius: 22px;
  background: #fff radial-gradient(circle at 22px 50%, #a19f9d 11px, transparent 12px);
}
.switch :checked + i {
  border-color: #70ada1;
  background: #70ada1 radial-gradient(circle at 60px 50%, #fff 11px, transparent 12px);
}
.switch svg {
  width: 26px;
  height: 26px;
  margin: 7px 0 0 14px;
  stroke: #fff;
  stroke-width: 2;
}
.drop {
  margin: 17px 14px 0 16px;
  height: 68px;
  flex: none;
  border: 2px dashed #dadada;
  background: #fff;
  line-height: 62px;
  padding-left: 24px;
  white-space: nowrap;
}
.data-search {
  height: 64px;
  flex: none;
  margin: 20px 12px 0 11px;
  padding-left: 32px;
  border-bottom-color: #a8a8a8;
}
.tree {
  flex: 1;
  min-height: 0;
  overflow: hidden;
  margin: 23px 11px 20px 0;
  background: linear-gradient(#dcdcdc, #dcdcdc) right top / 20px 1474px no-repeat;
}
.node {
  height: 64px;
  display: flex;
  align-items: center;
  gap: 18px;
  white-space: nowrap;
  padding-left: 37px;
}
.node.field {
  padding-left: 117px;
}
.node.group {
  padding-left: 77px;
}
.node.measure {
  padding-left: 157px;
}
.node .arrow {
  width: 22px;
  height: 22px;
}
.node .kind {
  position: relative;
  width: 34px;
  height: 36px;
}
.kind svg {
  width: 36px;
  height: 36px;
}
.kind b {
  position: absolute;
  left: 18px;
  top: 20px;
  width: 31px;
  height: 31px;
  border-radius: 16px;
  background: #70ada1;
}
.kind b svg {
  width: 15px;
  height: 15px;
  margin: 8px;
  stroke: #fff;
  stroke-width: 3;
}
.node input, .middle input {
  appearance: none;
  width: 32px;
  height: 32px;
  flex: none;
  border: 2px solid #b0aeac;
  border-radius: 4px;
  background: #fcfcfc;
}
.node input:checked {
  background: #70ada1;
}
.node input:checked::after {
  content: "";
  display: block;
  width: 18px;
  height: 9px;
  margin: 6px 0 0 5px;
  border: solid #fff;
  border-width: 0 0 3px 3px;
  transform: rotate(-45deg);
}
.status {
  height: 63px;
  flex: none;
  border-top: 2px solid #e4e4e4;
  background: #f9f9f9;
  display: flex;
  align-items: center;
  justify-content: space-between;
  padding: 0 50px 0 12px;
  color: #979797;
}
.zoom {
  display: flex;
  align-items: center;
  font-size: 32px;
}
.zoom button {
  font-size: 40px;
}
.zoom input {
  appearance: none;
  width: 266px;
  height: 28px;
  margin: 0 12px;
  background:
    linear-gradient(#a19f9d, #a19f9d) 133px 50% / 2px 16px no-repeat,
    linear-gradient(#a19f9d, #a19f9d) 0 50% / 100% 2px no-repeat;
}
.zoom input::-webkit-slider-thumb {
  appearance: none;
  width: 12px;
  height: 28px;
  background: #a19f9d;
}
.zoom span {
  margin: 0 52px 0 34px;
}
.zoom svg {
  width: 40px;
  height: 40px;
}

/* conditional formatting dialog */
.overlay {
  position: absolute;
  inset: 0;
  display: flex;
  align-items: center;
  justify-content: center;
  padding-left: 4px;
  z-index: 2;
}
.dialog {
  position: relative;
  width: 2507px;
  height: 1772px;
  padding: 40px 65px 64px 64px;
  border-radius: 4px;
  background: #fff;
  box-shadow: 0 55px 123px rgba(0, 0, 0, .22), 0 10px 31px rgba(0, 0, 0, .18);
  display: flex;
  flex-direction: column;
  align-items: flex-start;
  color: #333;
}
.dialog-head {
  align-self: stretch;
  display: flex;
  justify-content: space-between;
  align-items: center;
  margin-bottom: 46px;
}
.dialog-head h2 {
  font-size: 58px;
  line-height: 72px;
  font-weight: 700;
  color: #222;
}
.dialog-head svg {
  width: 38px;
  height: 38px;
  margin-right: 25px;
}
.row {
  align-self: stretch;
  display: flex;
  align-items: flex-end;
  gap: 76px;
}
.row-based {
  margin-top: 52px;
  justify-content: space-between;
}
.row-range {
  margin-top: 78px;
  justify-content: space-between;
}
.dialog .field label {
  display: block;
  font-size: 46px;
  line-height: 57px;
  margin-bottom: 32px;
  max-width: 710px;
  word-break: break-all;
}
.wide {
  width: 735px;
}
.end {
  width: 746px;
}
.select {
  position: relative;
}
.mid {
  width: 597px;
}
.select select {
  appearance: none;
  display: block;
  width: 100%;
  height: 85px;
  padding: 0 24px;
  border: 2px solid #8f8d8b;
  border-radius: 5px;
  background: #fff;
  color: #666;
  font-size: 40px;
}
.select svg {
  position: absolute;
  right: 24px;
  top: 31px;
  width: 24px;
  height: 24px;
  pointer-events: none;
}
.pair {
  display: flex;
  gap: 11px;
}
.color {
  width: 138px;
  height: 85px;
  border: 2px solid #8f8d8b;
  border-radius: 5px;
  display: flex;
  justify-content: space-between;
  align-items: center;
  padding: 0 16px 0 11px;
}
.color i {
  width: 43px;
  height: 43px;
  border: 2px solid #8f8d8b;
}
.color svg {
  width: 24px;
  height: 24px;
  margin-bottom: 14px;
}
.min-color {
  background: #dceeff;
}
.max-color {
  background: #118dff;
}
.value {
  width: 324px;
  height: 85px;
  margin-top: 15px;
  padding: 0 12px;
  border: 2px solid #c8c6c4;
  border-radius: 5px;
  background: #f3f2f1;
  font-size: 40px;
}
.value::placeholder {
  color: #a8a6a4;
}
.middle {
  display: flex;
  align-items: center;
  gap: 23px;
  margin: 58px 0 62px 4px;
  font-size: 40px;
  line-height: 54px;
}
.middle input {
  width: 54px;
  height: 54px;
  border-color: #8f8d8b;
  background: #fff;
}
.ramp {
  width: 2357px;
  height: 70px;
  border: 2px solid #777;
  background: linear-gradient(to right, #deefff, #118dff);
}
.dialog-foot {
  align-self: stretch;
  margin-top: auto;
  display: flex;
  gap: 22px;
  align-items: center;
  font-size: 40px;
}
.dialog-foot a {
  margin-right: auto;
  color: #117865;
  text-underline-offset: 6px;
}
.dialog-foot button {
  width: 163px;
  height: 84px;
  border: 2px solid #d6d6d6;
  border-radius: 8px;
  font-weight: 700;
  color: #222;
}
.dialog-foot .primary {
  background: #117865;
  border-color: #117865;
  color: #fff;
}

/* colour list under the minimum button */
.popup {
  position: absolute;
  left: 673px;
  top: 868px;
  width: 813px;
  height: 1060px;
  padding: 28px 43px 33px 42px;
  border: 2px solid #c6c6c6;
  border-radius: 8px;
  background: #fff;
  box-shadow: 0 8px 20px rgba(0, 0, 0, .14);
  display: flex;
  flex-direction: column;
}
.popup h3 {
  font-size: 39px;
  line-height: 54px;
  font-weight: 700;
  color: #222;
  margin-bottom: 41px;
}
.popup .recent {
  margin-bottom: 31px;
}
.swatches {
  display: flex;
  justify-content: space-between;
}
.swatches button {
  width: 53px;
  height: 53px;
  border: 2px solid #8f8d8b;
}
.popup hr {
  align-self: stretch;
  height: 3px;
  border: 0;
  background: #c8c8c8;
  margin: 31px 0 35px;
}
#shades {
  display: grid;
  gap: 22px;
}
.popup .second {
  margin: 31px 0 20px;
}
.popup .third {
  margin: 20px 0;
}
.other {
  display: flex;
  align-items: center;
  gap: 20px;
  font-size: 38px;
  line-height: 54px;
  margin: 10px 0 0 10px;
}
.other svg {
  width: 46px;
  height: 46px;
}
.reset {
  align-self: flex-end;
  margin-top: auto;
  width: 345px;
  height: 74px;
  border: 2px solid #8f8d8b;
  border-radius: 8px;
}

/* custom colour */
.picker {
  position: absolute;
  left: 1443px;
  top: 854px;
  width: 798px;
  height: 900px;
  border: 9px solid #f00;
  background: #fff;
  padding: 45px 28px 0 53px;
}
.picker::before {
  content: "";
  position: absolute;
  left: 0;
  top: 5px;
  width: 21px;
  height: 2px;
  background: #c6c6c6;
}
.sv {
  position: relative;
  height: 555px;
  margin: 0 7px 38px 14px;
  border: 1px solid #aaa;
  border-radius: 4px;
  background: linear-gradient(to top, #000, transparent), linear-gradient(to right, #fff, #ffff00);
}
.sv i {
  position: absolute;
  left: 554px;
  top: -38px;
  width: 60px;
  height: 60px;
  border: 2px solid #555;
  border-radius: 50%;
  background: #fffb1b;
  box-shadow: 0 14px 30px rgba(0, 0, 0, .2);
}
.hue {
  appearance: none;
  display: block;
  width: 678px;
  height: 53px;
  margin-left: 14px;
  border-radius: 3px;
  background: linear-gradient(to right, #f00, #ff0, #0f0, #0ff, #00f, #f0f, #f00);
}
.hue::-webkit-slider-thumb {
  appearance: none;
  width: 56px;
  height: 56px;
  border: 2px solid #555;
  border-radius: 50%;
  background: #ff0;
  box-shadow: 0 14px 30px rgba(0, 0, 0, .25);
}
.channels {
  display: flex;
  gap: 18px;
  margin-top: 9px;
  font-size: 32px;
}
.channels label {
  flex: 1;
  line-height: 48px;
}
.channels .hex {
  flex: none;
  width: 215px;
}
.channels input {
  display: block;
  width: 100%;
  height: 80px;
  margin-top: 8px;
  padding: 0 16px;
  border: 2px solid #8f8d8b;
  border-radius: 5px;
  font-size: 34px;
}

/* walkthrough marks */
.box {
  position: absolute;
  border: 9px solid #f00;
  width: 183px;
  height: 137px;
  top: 759px;
}
.box-min {
  left: 654px;
}
.box-max {
  left: 2283px;
}
.box-other {
  left: 703px;
  top: 1682px;
  width: 279px;
}
.step {
  position: absolute;
  width: 155px;
  height: 155px;
  border: 14px solid #c00;
  border-radius: 50%;
  background: #fff;
  color: #c00;
  font-size: 102px;
  font-weight: 700;
  line-height: 122px;
  text-align: center;
}
.step-1 {
  left: 759px;
  top: 577px;
}
.step-2 {
  left: 1016px;
  top: 1672px;
}
.step-3 {
  left: 1538px;
  top: 678px;
}
.step-4 {
  left: 2313px;
  top: 577px;
}
```

FILE: script.js
```javascript
// swatches
const theme = ["#FFFFFF", "#000000", "#118DFF", "#12239E", "#E66C37", "#6B007B", "#E044A7", "#744EC2", "#D9B300", "#D64550"];
const shades = [
  ["#E6E6E6", "#999999", "#A0D1FF", "#A0A7D8", "#F5C4AF", "#C499CA", "#F3B4DC", "#C7B8E7", "#F0E199", "#EFB5B9"],
  ["#CCCCCC", "#666666", "#70BBFF", "#717BC4", "#F0A787", "#A666B0", "#EC8FCA", "#AB95DA", "#E8D166", "#E68F96"],
  ["#B3B3B3", "#333333", "#41A4FF", "#414FB1", "#EB895F", "#893395", "#E669B9", "#9071CE", "#E1C233", "#DE6A73"],
  ["#808080", "#1A1A1A", "#0D6ABF", "#0E1A77", "#AD5129", "#50005C", "#A8337D", "#573B92", "#A38600", "#A1343C"],
  ["#666666", "#000000", "#094780", "#09124F", "#73361C", "#36003E", "#702254", "#3A2761", "#6D5A00", "#6B2328"]
];
const row = colors => colors.map(c => `<button style="background:${c}" aria-label="${c}"></button>`).join("");
document.getElementById("theme").innerHTML = row(theme);
document.getElementById("recent").innerHTML = row(theme);
document.getElementById("shades").innerHTML = shades.map(s => `<div class="swatches">${row(s)}</div>`).join("");

// country table
const jack = `<path d="M0 0l24 16M24 0L0 16" stroke="#fff" stroke-width="4"/><path d="M12 0v16M0 8h24" stroke="#fff" stroke-width="6"/><path d="M12 0v16M0 8h24" stroke="#c8102e" stroke-width="3"/>`;
const bars = (y, h, colors) => colors.map((c, i) => `<rect x="0" y="${y + i * h}" width="48" height="${h}" fill="${c}"/>`).join("");
const cols = colors => colors.map((c, i) => `<rect x="${i * 16}" y="0" width="16" height="32" fill="${c}"/>`).join("");
const countries = [
  ["미국", bars(4, 4, ["#b22234", "#fff", "#b22234", "#fff", "#b22234", "#fff", "#b22234"]) + `<rect y="4" width="20" height="14" fill="#3c3b6e"/>`],
  ["프랑스", cols(["#002654", "#fff", "#ce1126"])],
  ["오스트레일리아", `<rect y="8" width="48" height="24" fill="#00008b"/><g transform="translate(0 8) scale(1 .75)">${jack}</g><circle cx="12" cy="26" r="3" fill="#fff"/><circle cx="36" cy="13" r="1.500" fill="#fff"/><circle cx="36" cy="27" r="1.500" fill="#fff"/><circle cx="30" cy="20" r="1.500" fill="#fff"/><circle cx="42" cy="18" r="1.500" fill="#fff"/>`],
  ["독일", bars(2, 10, ["#000", "#dd0000", "#ffce00"])],
  ["일본", `<rect width="48" height="32" fill="#fff"/><circle cx="24" cy="16" r="10" fill="#bc002d"/>`],
  ["중국", `<rect width="48" height="32" fill="#ee1c25"/><path d="M8 4l1.500 4h4l-3 2.500 1 4L8 12l-3.500 2.500 1-4-3-2.500h4z" fill="#ff0"/><circle cx="18" cy="5" r="1" fill="#ff0"/><circle cx="20" cy="9" r="1" fill="#ff0"/><circle cx="18" cy="13" r="1" fill="#ff0"/>`],
  ["스페인", `<rect width="48" height="32" fill="#c60b1e"/><rect y="8" width="48" height="16" fill="#ffc400"/><circle cx="16" cy="16" r="4" fill="#c6804e"/>`],
  ["이탈리아", cols(["#009246", "#fff", "#ce2b37"])],
  ["영국", `<rect width="48" height="32" fill="#012169"/><path d="M0 0l48 32M48 0L0 32" stroke="#fff" stroke-width="6"/><path d="M0 0l48 32M48 0L0 32" stroke="#c8102e" stroke-width="2"/><path d="M24 0v32M0 16h48" stroke="#fff" stroke-width="10"/><path d="M24 0v32M0 16h48" stroke="#c8102e" stroke-width="5"/>`],
  ["캐나다", `<rect y="8" width="48" height="24" fill="#fff"/><rect y="8" width="13" height="24" fill="#d52b1e"/><rect x="35" y="8" width="13" height="24" fill="#d52b1e"/><path d="M24 11l2 4 3-1-1 4 4-1-2 4-5 3v3h-2v-3l-5-3-2-4 4 1-1-4 3 1z" fill="#d52b1e"/>`],
  ["브라질", `<rect width="48" height="32" fill="#009b3a"/><path d="M24 4l20 12-20 12L4 16z" fill="#fedf00"/><circle cx="24" cy="16" r="7" fill="#002776"/><path d="M17 15c5-1 10 0 14 4" stroke="#fff"/>`],
  ["네덜란드", bars(0, 11, ["#ae1c28", "#fff", "#21468b"])],
  ["폴란드", bars(0, 16, ["#fff", "#dc143c"])],
  ["뉴질랜드", `<rect y="8" width="48" height="24" fill="#00247d"/><g transform="translate(0 8) scale(1 .75)">${jack}</g><circle cx="36" cy="13" r="1.500" fill="#f66"/><circle cx="36" cy="27" r="1.500" fill="#f66"/><circle cx="30" cy="19" r="1.500" fill="#f66"/><circle cx="42" cy="18" r="1.500" fill="#f66"/>`],
  ["헝가리", bars(5, 9, ["#cd2a3e", "#fff", "#436f4d"])],
  ["벨기에", cols(["#000", "#fae042", "#ed2939"])]
];
document.getElementById("countries").innerHTML = countries.map(([name, flag]) =>
  `<tr><td><svg viewBox="0 0 48 32">${flag}</svg></td><td>${name}</td><td></td><td></td></tr>`).join("");

// visual gallery, six per row
const visuals = ["sbar", "scol", "bar", "col", "sbar", "scol",
  "combo", "area", "area", "sarea", "combo", "combo2",
  "col", "scol", "funnel", "scatter", "pie", "donut",
  "sarea", "map", "map", "arc", "gauge", "card",
  "matrix", "table", "slicer", "table", "matrix", "lines",
  "page", "narr", "narr", "goal", "page", "geo"];
document.getElementById("gallery").innerHTML = visuals.map((v, i) =>
  `<svg${i === 27 ? ' class="picked"' : ""}><use href="#v-${v}"/></svg>`).join("");

// fields: [level, icon, name, ticked]
const fields = [
  ["top", "calcs", "텍스트 보관용 테이블"],
  ["field", "calc", "텍스트_개요"],
  ["field", "calc", "텍스트_메달 ..."],
  ["field", "calc", "텍스트_종목 ..."],
  ["top", "table", "국가 테이블", true],
  ["field", "", "국가", true],
  ["field", "", "국기", true],
  ["field", "", "대륙"],
  ["field", "", "인원 수", true],
  ["top", "table", "국가별 종목별 메달 수", true],
  ["field", "", "국가"],
  ["field", "sigma", "금"],
  ["field", "sigma", "동"],
  ["field", "sigma", "은"],
  ["field", "", "종목"],
  ["group", "folder", "측정값 모음", true],
  ["measure", "calc", "메달 보유 ..."],
  ["measure", "calc", "메달 보유 ..."],
  ["measure", "calc", "메달 합계", true],
  ["measure", "calc", "메달당 국..."],
  ["measure", "calc", "인원 당 메...", true],
  ["measure", "calc", "최대 메달 ..."],
  ["field", "sigma", "합계"],
  ["top", "table", "종목 테이블"],
  ["field", "", "종목"]
];
document.getElementById("tree").innerHTML = fields.map(([level, icon, name, on]) => {
  const pic = icon ? `<svg><use href="#${icon}"/></svg>` : "";
  if (level === "top" || level === "group") {
    const badge = on ? `<b><svg viewBox="0 0 20 20"><path d="M2 11l5 5L18 4"/></svg></b>` : "";
    return `<div class="node ${level}"><svg class="arrow"><use href="#chev"/></svg><span class="kind">${pic}${badge}</span>${name}</div>`;
  }
  return `<label class="node ${level}"><input type="checkbox"${on ? " checked" : ""}><span class="kind">${pic}</span>${name}</label>`;
}).join("");
```
